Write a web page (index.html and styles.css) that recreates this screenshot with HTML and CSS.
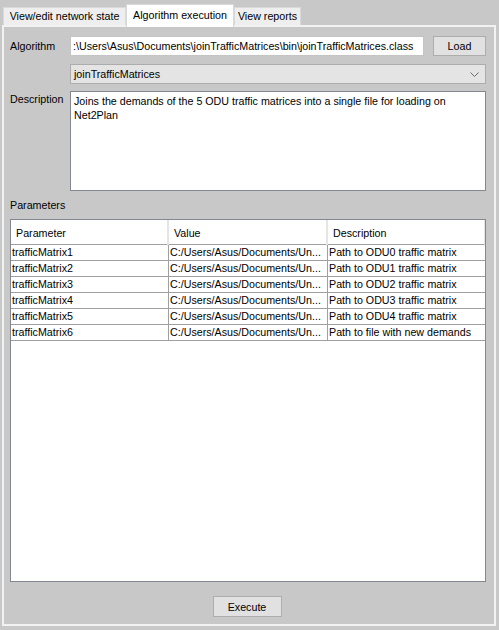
FILE: index.html
```html
<!DOCTYPE html>
<html>
<head>
<meta charset="utf-8">
<link rel="stylesheet" href="styles.css">
</head>
<body>
<div class="window">
  <div class="tabs">
    <div class="tab tab-net">View/edit network state</div>
    <div class="tab tab-alg active">Algorithm execution</div>
    <div class="tab tab-rep">View reports</div>
  </div>
  <div class="panel">
    <div class="row r-alg">
      <span class="lbl">Algorithm</span>
      <div class="field">:\Users\Asus\Documents\joinTrafficMatrices\bin\joinTrafficMatrices.class</div>
      <button class="btn load">Load</button>
    </div>
    <div class="row r-combo">
      <span class="lbl"></span>
      <div class="combo">
        <span class="combo-text">joinTrafficMatrices</span>
        <svg class="chev" width="9" height="5" viewBox="0 0 9 5"><path d="M0.5 0.5 L4.5 4.5 L8.5 0.5" fill="none" stroke="#6a6a6a" stroke-width="1"/></svg>
      </div>
    </div>
    <div class="row r-desc">
      <span class="lbl lbl-top">Description</span>
      <div class="textarea">Joins the demands of the 5 ODU traffic matrices into a single file for loading on Net2Plan</div>
    </div>
    <div class="section-label">Parameters</div>
    <div class="table">
      <div class="trow thead">
        <div class="th">Parameter</div>
        <div class="th">Value</div>
        <div class="th last">Description</div>
      </div>
      <div class="trow tbody-row">
        <div class="td">trafficMatrix1</div><div class="td">C:/Users/Asus/Documents/Un...</div><div class="td last">Path to ODU0 traffic matrix</div>
      </div>
      <div class="trow tbody-row">
        <div class="td">trafficMatrix2</div><div class="td">C:/Users/Asus/Documents/Un...</div><div class="td last">Path to ODU1 traffic matrix</div>
      </div>
      <div class="trow tbody-row">
        <div class="td">trafficMatrix3</div><div class="td">C:/Users/Asus/Documents/Un...</div><div class="td last">Path to ODU2 traffic matrix</div>
      </div>
      <div class="trow tbody-row">
        <div class="td">trafficMatrix4</div><div class="td">C:/Users/Asus/Documents/Un...</div><div class="td last">Path to ODU3 traffic matrix</div>
      </div>
      <div class="trow tbody-row">
        <div class="td">trafficMatrix5</div><div class="td">C:/Users/Asus/Documents/Un...</div><div class="td last">Path to ODU4 traffic matrix</div>
      </div>
      <div class="trow tbody-row">
        <div class="td">trafficMatrix6</div><div class="td">C:/Users/Asus/Documents/Un...</div><div class="td last">Path to file with new demands</div>
      </div>
    </div>
    <div class="actions">
      <button class="btn exec">Execute</button>
    </div>
  </div>
</div>
</body>
</html>
```
FILE: styles.css
```css
* { box-sizing: border-box; }
html, body {
  margin: 0;
  padding: 0;
  width: 499px;
  height: 630px;
  background: #c8c8c8;
  font-family: "Liberation Sans", Arial, sans-serif;
  font-size: 10.7px;
  color: #000;
  overflow: hidden;
}
.window {
  display: flex;
  flex-direction: column;
  height: 630px;
}
.tabs {
  display: flex;
  align-items: flex-end;
  height: 25px;
  padding-left: 3px;
}
.tab {
  height: 18px;
  padding: 0;
  text-align: center;
  line-height: 17px;
  background: #eeeeee;
  border: 1px solid #d9d9d9;
  border-bottom: none;
  white-space: nowrap;
}
.tab-net { width: 123px; }
.tab-alg { width: 108px; }
.tab-rep { width: 67px; }
.tab.active {
  height: 23px;
  line-height: 20px;
  background: #ffffff;
  border-color: #d9d9d9;
  margin-bottom: -2px;
  position: relative;
  z-index: 1;
}
.panel {
  margin: 0 3px 4px 2px;
  flex: 1;
  border: 2px solid #f2f2f2;
  display: flex;
  flex-direction: column;
  padding: 8px 8px 0 6px;
}
.row {
  display: flex;
  align-items: center;
}
.lbl {
  width: 60px;
  flex: none;
}
.lbl-top { align-self: flex-start; margin-top: 2px; }
.r-alg { height: 21px; }
.field {
  width: 354px;
  height: 20px;
  margin-top: 1px;
  background: #fff;
  border: 1px solid #c4c4c4;
  padding-left: 2px;
  line-height: 18px;
  white-space: nowrap;
  overflow: hidden;
}
.btn {
  font-family: "Liberation Sans", Arial, sans-serif;
  font-size: 10.7px;
  color: #000;
  background: #e1e1e1;
  border: 1px solid #adadad;
  padding: 0;
  height: 20px;
}
.load {
  width: 53px;
  margin-left: 9px;
}
.r-combo { margin-top: 8px; }
.combo {
  flex: 1;
  height: 20px;
  background: #e4e4e4;
  border: 1px solid #acacac;
  display: flex;
  align-items: center;
  padding: 0 6px 0 3px;
}
.combo-text { flex: 1; }
.chev { flex: none; margin-top: 1px; }
.r-desc {
  margin-top: 7px;
  align-items: flex-start;
}
.textarea {
  flex: 1;
  height: 100px;
  background: #fff;
  border: 1px solid #828790;
  padding: 2px 3px;
  line-height: 14px;
}
.section-label {
  margin-top: 6px;
  height: 22px;
  line-height: 14px;
  padding-top: 1px;
}
.table {
  height: 363px;
  background: #fff;
  border: 1px solid #828790;
}
.trow {
  display: grid;
  grid-template-columns: 158px 159px 1fr;
}
.thead {
  height: 25px;
  border-bottom: 1px solid #a0a0a0;
}
.th {
  padding-left: 5px;
  line-height: 26px;
  border-right: 2px solid #e5e5e5;
}
.th.last { border-right: 1px solid #e5e5e5; }
.tbody-row {
  height: 16px;
  border-bottom: 1px solid #a0a0a0;
}
.td {
  padding-left: 1px;
  line-height: 15px;
  border-right: 1px solid #a0a0a0;
  white-space: nowrap;
  overflow: hidden;
}
.td.last { border-right: none; }
.actions {
  display: flex;
  justify-content: center;
  margin-top: 14px;
  padding-right: 2px;
}
.exec {
  width: 69px;
  height: 21px;
  border-color: #adadad;
}
```
